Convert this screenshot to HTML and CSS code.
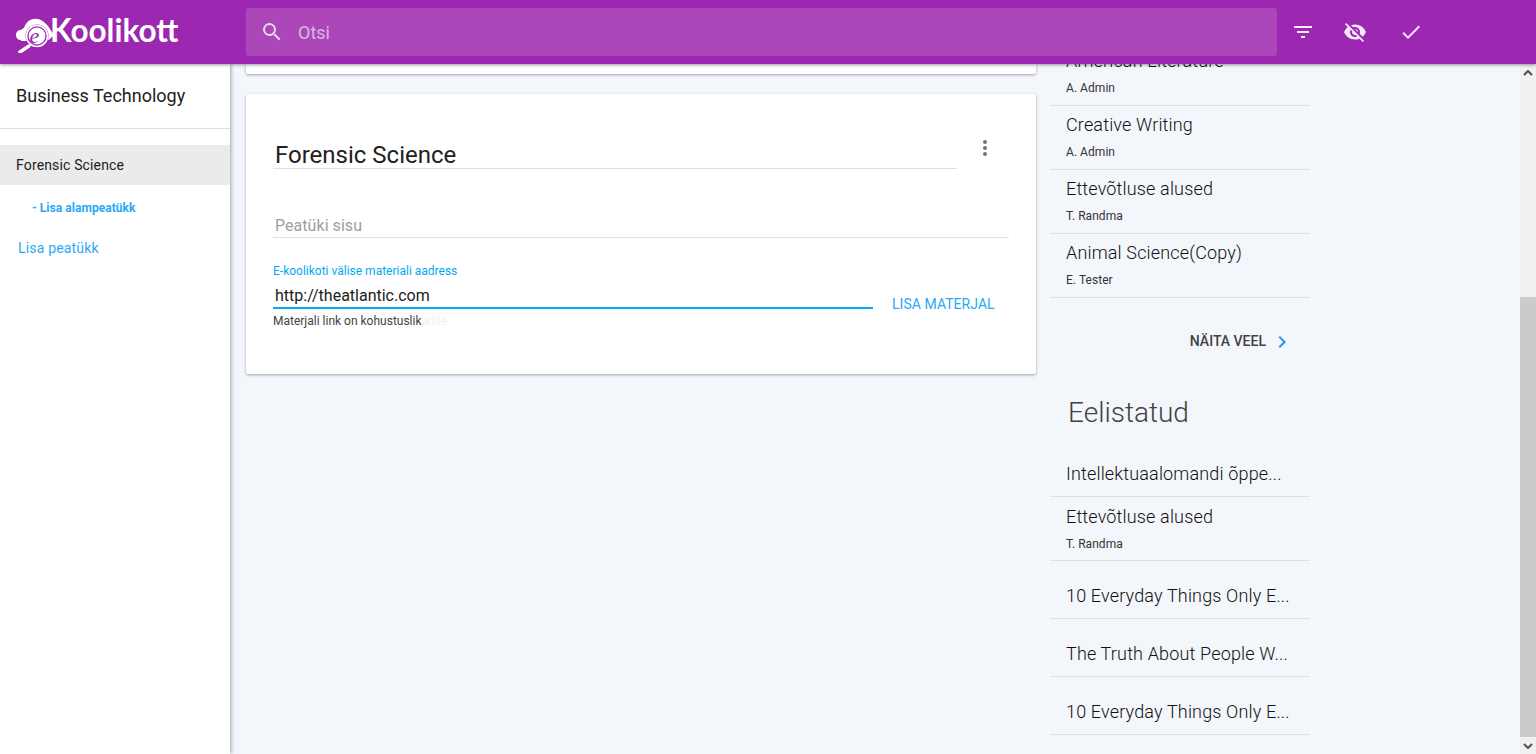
FILE: index.html
```html
<!DOCTYPE html>
<html lang="en">
<head>
    <meta charset="UTF-8">
    <title>e-Koolikott</title>
    <link rel="stylesheet" href="styles.css">
</head>
<body>
    <header class="topbar">
        <a class="logo">
            <svg class="logo-mark" width="38" height="38" viewBox="0 0 38 38">
                <path fill="#fff" d="M5 25c-3 0-5-2-5-5 0-3 2-5 5-5 1-1 2-2 3-2 2-6 7-10 13-9 3 0 6 2 8 4 3 2 6 8 9 12-3 3-6 6-9 6H5z"/>
                <circle cx="21" cy="21" r="11.5" fill="#9c27b0"/>
                <circle cx="21" cy="21" r="10.5" fill="none" stroke="#fff" stroke-width="1.6"/>
                <circle cx="21" cy="21" r="8.4" fill="#fff"/>
                <path d="M13 31l-9 6" stroke="#fff" stroke-width="3.4" stroke-linecap="round"/>
                <text x="13.5" y="28" class="logo-e">e</text>
            </svg>
            <span class="logo-text">Koolikott</span>
        </a>
        <div class="search">
            <svg width="24" height="24" viewBox="0 0 24 24" fill="#ecd3f1"><path d="M15.5 14h-.79l-.28-.27A6.47 6.47 0 0 0 16 9.5 6.5 6.5 0 1 0 9.5 16c1.61 0 3.09-.59 4.23-1.57l.27.28v.79l5 4.99L20.49 19l-4.99-5zm-6 0C7.01 14 5 11.99 5 9.5S7.01 5 9.5 5 14 7.01 14 9.5 11.99 14 9.5 14z"/></svg>
            <span class="search-text">Otsi</span>
        </div>
        <div class="top-actions">
            <svg width="24" height="24" viewBox="0 0 24 24" fill="#f6e9f8"><path d="M10 18h4v-2h-4v2zM3 6v2h18V6H3zm3 7h12v-2H6v2z"/></svg>
            <svg width="24" height="24" viewBox="0 0 24 24" fill="#f6e9f8"><path d="M12 7c2.76 0 5 2.24 5 5 0 .65-.13 1.26-.36 1.83l2.92 2.92c1.51-1.26 2.7-2.89 3.43-4.75-1.73-4.39-6-7.5-11-7.5-1.4 0-2.74.25-3.98.7l2.16 2.16C10.74 7.13 11.35 7 12 7zM2 4.27l2.28 2.28.46.46A11.8 11.8 0 0 0 1 12c1.73 4.39 6 7.5 11 7.5 1.55 0 3.03-.3 4.38-.84l.42.42L19.73 22 21 20.73 3.27 3 2 4.27zM7.53 9.8l1.55 1.55c-.05.21-.08.43-.08.65 0 1.66 1.34 3 3 3 .22 0 .44-.03.65-.08l1.55 1.55c-.67.33-1.41.53-2.2.53-2.76 0-5-2.24-5-5 0-.79.2-1.53.53-2.2zm4.31-.78l3.15 3.15.02-.16c0-1.66-1.34-3-3-3l-.17.01z"/></svg>
            <svg width="24" height="24" viewBox="0 0 24 24" fill="#f6e9f8"><path d="M9 16.17L4.83 12l-1.42 1.41L9 19 21 7l-1.41-1.41z"/></svg>
        </div>
    </header>

    <div class="layout">
        <aside class="sidebar">
            <div class="sidebar-title">Business Technology</div>
            <div class="chapter-active">Forensic Science</div>
            <div class="add-sub">- Lisa alampeatükk</div>
            <div class="add-chapter">Lisa peatükk</div>
        </aside>

        <main class="content">
            <div class="main-col">
                <div class="card-stub"></div>
                <section class="card">
                    <div class="card-head">
                        <h2 class="card-title">Forensic Science</h2>
                        <svg class="more" width="24" height="24" viewBox="0 0 24 24" fill="#757575"><path d="M12 8c1.1 0 2-.9 2-2s-.9-2-2-2-2 .9-2 2 .9 2 2 2zm0 2c-1.1 0-2 .9-2 2s.9 2 2 2 2-.9 2-2-.9-2-2-2zm0 6c-1.1 0-2 .9-2 2s.9 2 2 2 2-.9 2-2-.9-2-2-2z"/></svg>
                    </div>
                    <div class="field-body">Peatüki sisu</div>
                    <div class="material">
                        <div class="material-field">
                            <label class="material-label">E-koolikoti välise materiali aadress</label>
                            <div class="material-input">http://theatlantic.com</div>
                            <div class="material-help">Materjali link on kohustuslik<span class="ghost">adile</span></div>
                        </div>
                        <span class="material-btn">LISA MATERJAL</span>
                    </div>
                </section>
            </div>

            <div class="side-col">
                <div class="item"><div class="item-title">American Literature</div><div class="item-author">A. Admin</div></div>
                <div class="item"><div class="item-title">Creative Writing</div><div class="item-author">A. Admin</div></div>
                <div class="item"><div class="item-title">Ettevõtluse alused</div><div class="item-author">T. Randma</div></div>
                <div class="item"><div class="item-title">Animal Science(Copy)</div><div class="item-author">E. Tester</div></div>
                <div class="show-more">
                    <span>NÄITA VEEL</span>
                    <svg width="24" height="24" viewBox="0 0 24 24" fill="#2196f3"><path d="M10 6L8.59 7.41 13.17 12l-4.58 4.59L10 18l6-6z"/></svg>
                </div>
                <h3 class="side-heading">Eelistatud</h3>
                <div class="item single"><div class="item-title">Intellektuaalomandi õppe...</div></div>
                <div class="item lower"><div class="item-title">Ettevõtluse alused</div><div class="item-author">T. Randma</div></div>
                <div class="item single"><div class="item-title">10 Everyday Things Only E...</div></div>
                <div class="item single"><div class="item-title">The Truth About People W...</div></div>
                <div class="item single"><div class="item-title">10 Everyday Things Only E...</div></div>
            </div>
        </main>

        <div class="scrollbar">
            <div class="scroll-btn"><svg width="10" height="6" viewBox="0 0 10 6"><path d="M1 5l4-4 4 4" fill="none" stroke="#505050" stroke-width="2"/></svg></div>
            <div class="scroll-track"></div>
            <div class="scroll-thumb"></div>
            <div class="scroll-btn"><svg width="10" height="6" viewBox="0 0 10 6"><path d="M1 1l4 4 4-4" fill="none" stroke="#505050" stroke-width="2"/></svg></div>
        </div>
    </div>
</body>
</html>
```

FILE: styles.css
```css
html, body {
    height: 100%;
}
body {
    margin: 0;
    display: flex;
    flex-direction: column;
    overflow: hidden;
    font-family: Roboto, "Liberation Sans", sans-serif;
    background-color: #f3f6fb;
    color: #212121;
}
.topbar {
    position: relative;
    z-index: 3;
    flex: none;
    height: 64px;
    display: flex;
    align-items: center;
    background-color: #9c27b0;
    box-shadow: 0 1px 3px rgba(0,0,0,0.4);
}
.logo {
    width: 246px;
    flex: none;
    display: flex;
    align-items: center;
    padding-left: 16px;
    box-sizing: border-box;
}
.logo-mark {
    flex: none;
    margin-top: 4px;
}
.logo-e {
    font-family: "Liberation Serif", serif;
    font-style: italic;
    font-size: 22px;
    fill: #9c27b0;
}
.logo-text {
    margin-left: -4px;
    margin-top: -4px;
    font-family: Lato, sans-serif;
    font-weight: 700;
    font-size: 31.5px;
    color: #fff;
}
.search {
    width: 1031px;
    height: 48px;
    flex: none;
    display: flex;
    align-items: center;
    padding-left: 14px;
    box-sizing: border-box;
    border-radius: 3px;
    background-color: #ab47b8;
}
.search-text {
    margin-left: 14px;
    font-size: 18px;
    color: #dcb6e4;
}
.top-actions {
    display: flex;
    align-items: center;
    margin-left: 14px;
}
.top-actions svg:nth-child(2) {
    margin: 0 32px 0 28px;
}
.layout {
    flex: 1;
    min-height: 0;
    display: flex;
}
.sidebar {
    position: relative;
    z-index: 2;
    width: 230px;
    flex: none;
    background: white;
    box-shadow: 1px 0 4px rgba(0,0,0,0.35);
}
.sidebar-title {
    height: 64px;
    line-height: 64px;
    padding-left: 16px;
    font-size: 18px;
    border-bottom: 1px solid #e0e0e0;
}
.chapter-active {
    margin-top: 16px;
    height: 40px;
    line-height: 40px;
    padding-left: 16px;
    font-size: 14px;
    letter-spacing: 0.15px;
    background-color: #ebebeb;
}
.add-sub {
    margin-top: 15px;
    padding-left: 32px;
    font-size: 12px;
    line-height: 16px;
    font-weight: 700;
    letter-spacing: 0.05px;
    color: #29a9f5;
}
.add-chapter {
    margin-top: 22px;
    padding-left: 18px;
    font-size: 14px;
    line-height: 20px;
    letter-spacing: 0.18px;
    color: #29a9f5;
}
.content {
    flex: 1;
    min-width: 0;
    display: flex;
    align-items: flex-start;
    overflow: hidden;
    padding-left: 16px;
}
.main-col {
    width: 790px;
    flex: none;
}
.card-stub {
    height: 10px;
    margin-bottom: 20px;
    background: white;
    border-radius: 0 0 2px 2px;
    box-shadow: 0 1px 3px rgba(0,0,0,0.35);
}
.card {
    height: 280px;
    box-sizing: border-box;
    padding: 0 27px 0 27px;
    background: white;
    border-radius: 2px;
    box-shadow: 0 1px 3px rgba(0,0,0,0.35);
}
.card-head {
    display: flex;
    padding-top: 42px;
}
.card-title {
    width: 684px;
    height: 33px;
    margin: 0;
    padding-left: 2px;
    box-sizing: border-box;
    font-size: 24px;
    font-weight: 400;
    line-height: 39px;
    border-bottom: 1px solid #e0e0e0;
}
.more {
    margin: 0 0 0 16px;
}
.field-body {
    margin-top: 44px;
    height: 24px;
    padding-left: 2px;
    font-size: 16px;
    line-height: 26px;
    letter-spacing: 0.05px;
    color: #9e9e9e;
    border-bottom: 1px solid #e0e0e0;
}
.material {
    margin-top: 26px;
    display: flex;
}
.material-field {
    width: 600px;
    flex: none;
}
.material-label {
    display: block;
    font-size: 12px;
    line-height: 14px;
    color: #03a9f4;
}
.material-input {
    height: 28px;
    padding-left: 2px;
    box-sizing: border-box;
    font-size: 16px;
    line-height: 30px;
    margin-top: 3px;
    border-bottom: 2px solid #03a9f4;
}
.material-help {
    margin-top: 5px;
    font-size: 12px;
    line-height: 14px;
    color: #424242;
}
.ghost {
    color: #f0f0f0;
}
.material-btn {
    margin: 32px 0 0 19px;
    font-size: 14px;
    line-height: 16px;
    letter-spacing: 0.05px;
    color: #29a9f5;
}
.side-col {
    width: 260px;
    flex: none;
    margin: -22px 0 0 14px;
}
.item {
    height: 64px;
    box-sizing: border-box;
    padding: 7px 16px 0;
    border-bottom: 1px solid #e0e0e0;
}
.item.lower {
    padding-top: 8px;
}
.item.single {
    height: 58px;
    padding-top: 23px;
}
.item-title {
    font-size: 18px;
    font-weight: 300;
    line-height: 24px;
    letter-spacing: 0.16px;
    color: #111;
    white-space: nowrap;
}
.item-author {
    margin-top: 8px;
    font-size: 12px;
    line-height: 14px;
    letter-spacing: 0.05px;
    color: #333;
}
.show-more {
    display: flex;
    justify-content: flex-end;
    align-items: center;
    height: 86px;
    padding-right: 16px;
    font-size: 14px;
    font-weight: 500;
    color: #424242;
}
.show-more svg {
    margin-left: 4px;
    position: relative;
    top: 1px;
}
.side-heading {
    margin: 0;
    padding-left: 18px;
    height: 55px;
    font-size: 28px;
    font-weight: 300;
    line-height: 58px;
    color: #424242;
}
.scrollbar {
    width: 16px;
    flex: none;
    display: flex;
    flex-direction: column;
    background-color: #f1f1f1;
}
.scroll-btn {
    height: 17px;
    flex: none;
    display: flex;
    align-items: center;
    justify-content: center;
}
.scroll-track {
    height: 216px;
    flex: none;
}
.scroll-thumb {
    flex: 1;
    background-color: #cbcbcb;
}
```
